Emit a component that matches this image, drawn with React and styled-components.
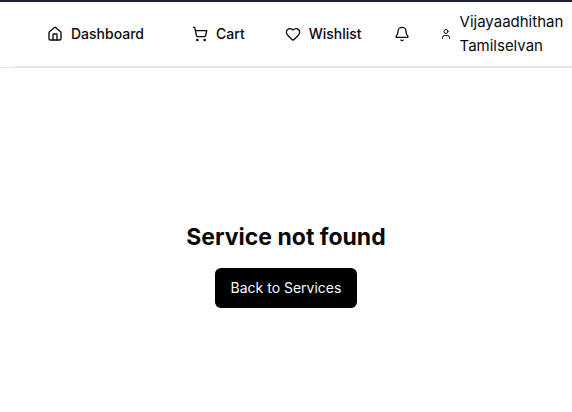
import React from "react";
import styled, { createGlobalStyle } from "styled-components";
import { House, ShoppingCart, Heart, Bell, User } from "lucide-react";

const GlobalStyle = createGlobalStyle`
  *, *::before, *::after { box-sizing: border-box; }
  body {
    margin: 0;
    background: #ffffff;
    color: #0a0a0a;
    font-family: Inter, "Liberation Sans", sans-serif;
    font-size: 15px;
    line-height: 24px;
  }
`;

const Header = styled.header`
  border-top: 2px solid #1b2138;
  border-bottom: 1px solid #e5e5e8;
`;

const Nav = styled.nav`
  display: flex;
  align-items: center;
  gap: 16px;
  min-height: 66px;
  margin-left: 15px;
  margin-bottom: -1px;
  padding: 8px 0 8px 16px;
  border-bottom: 2px solid #e8e3e5;
`;

const NavLink = styled.a`
  display: inline-flex;
  flex-shrink: 0;
  align-items: center;
  gap: 8px;
  padding: 8px ${({ $pad }) => $pad}px;
  color: inherit;
  font-size: 14px;
  font-weight: 500;
  line-height: 20px;
  text-decoration: none;
`;

const IconButton = styled.button`
  display: inline-flex;
  flex-shrink: 0;
  padding: 8px;
  border: 0;
  background: none;
  color: inherit;
  cursor: pointer;
`;

const UserButton = styled.button`
  display: inline-flex;
  align-items: center;
  gap: 8px;
  padding: 0 6px;
  border: 0;
  background: none;
  color: inherit;
  font: inherit;
  text-align: left;
  cursor: pointer;

  svg { flex-shrink: 0; }
`;

const Main = styled.main`
  display: flex;
  flex-direction: column;
  align-items: center;
  gap: 15px;
  padding: 153px 16px 64px;
`;

const Title = styled.h1`
  margin: 0;
  font-size: 23px;
  font-weight: 700;
  line-height: 32px;
  text-align: center;
`;

const PrimaryButton = styled.button`
  padding: 10px 16px;
  border: 0;
  border-radius: 6px;
  background: #000000;
  color: #fafafa;
  font-family: inherit;
  font-size: 14px;
  font-weight: 400;
  line-height: 20px;
  cursor: pointer;
`;

export default function App() {
  return (
    <>
      <GlobalStyle />
      <Header>
        <Nav>
          <NavLink href="#dashboard" $pad={16}>
            <House size={16} />
            Dashboard
          </NavLink>
          <NavLink href="#cart" $pad={16}>
            <ShoppingCart size={16} />
            Cart
          </NavLink>
          <NavLink href="#wishlist" $pad={8}>
            <Heart size={16} />
            Wishlist
          </NavLink>
          <IconButton type="button" aria-label="Notifications">
            <Bell size={16} />
          </IconButton>
          <UserButton type="button">
            <User size={12} />
            <span>Vijayaadhithan Tamilselvan</span>
          </UserButton>
        </Nav>
      </Header>
      <Main>
        <Title>Service not found</Title>
        <PrimaryButton type="button">Back to Services</PrimaryButton>
      </Main>
    </>
  );
}
